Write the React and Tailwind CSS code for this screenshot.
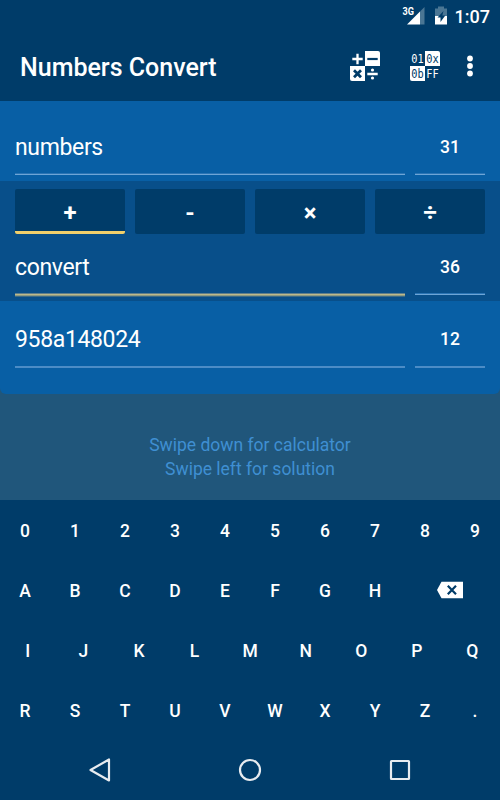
import React from 'react';

const operators = ['+', '-', '×', '÷'];

const keyRows = [
  ['0', '1', '2', '3', '4', '5', '6', '7', '8', '9'],
  ['A', 'B', 'C', 'D', 'E', 'F', 'G', 'H', 'DEL'],
  ['I', 'J', 'K', 'L', 'M', 'N', 'O', 'P', 'Q'],
  ['R', 'S', 'T', 'U', 'V', 'W', 'X', 'Y', 'Z', '.'],
];

const StatusBar = () => (
  <div className="h-9 flex items-start justify-end pr-[10px]">
    <svg width="46" height="30" viewBox="0 0 46 30" className="mr-[8px]">
      <path d="M19 11.5 L23.5 7 V24.5 H19 Z" fill="#4a7694" />
      <path d="M19 11.5 V24.5 H6 Z" fill="#fff" />
      <text x="1.5" y="15" fill="#fff" stroke="#003c69" strokeWidth="2" paintOrder="stroke" fontSize="10" fontWeight="700" fontFamily="Roboto" textLength="11.5" lengthAdjust="spacingAndGlyphs">3G</text>
      <path d="M37 6.5 h6 v2 h3 v8 h-12 v-8 h3 z" fill="#4a7694" />
      <path d="M34 16 h12 v8.5 h-12 z" fill="#fff" />
      <path d="M42.5 11 L36.5 17.4 h3 v4.6 L44.3 15.6 h-3 z" fill="#003c69" />
    </svg>
    <span className="text-[18px] leading-[33px] font-medium">1:07</span>
  </div>
);

const CalculatorIcon = () => (
  <svg width="30" height="30" viewBox="0 0 30 30">
    <path d="M15 0 h13 a2 2 0 0 1 2 2 v13 h-15 z" fill="#fff" />
    <path d="M0 15 h15 v15 h-13 a2 2 0 0 1 -2 -2 z" fill="#fff" />
    <path d="M7.5 2.8 v10.4 M2.3 8 h10.4 M17.3 23 h10.4" stroke="#fff" strokeWidth="2.3" />
    <path d="M17.3 8 h10.4" stroke="#003c69" strokeWidth="2.2" />
    <path d="M4 19.3 L11 26.3 M11 19.3 L4 26.3" stroke="#003c69" strokeWidth="2.8" />
    <circle cx="22.5" cy="19" r="1.6" fill="#fff" />
    <circle cx="22.5" cy="27" r="1.6" fill="#fff" />
  </svg>
);

const BaseIcon = () => (
  <svg width="30" height="30" viewBox="0 0 30 30" fontFamily="DejaVu Sans Mono, monospace">
    <path d="M15 0 h13 a2 2 0 0 1 2 2 v13 h-15 z" fill="#fff" />
    <path d="M0 15 h15 v15 h-13 a2 2 0 0 1 -2 -2 z" fill="#fff" />
    <g fontSize="12">
      <text x="1.3" y="12" fill="#fff" textLength="12.4" lengthAdjust="spacingAndGlyphs">01</text>
      <text x="16.3" y="12" fill="#003c69" textLength="12.4" lengthAdjust="spacingAndGlyphs">0x</text>
      <text x="1.3" y="27" fill="#003c69" textLength="12.4" lengthAdjust="spacingAndGlyphs">0b</text>
      <text x="16.3" y="27" fill="#fff" textLength="12.4" lengthAdjust="spacingAndGlyphs">FF</text>
    </g>
  </svg>
);

const AppBar = () => (
  <div className="h-[65px] flex items-start pl-5 pr-[26px]">
    <h1 className="flex-1 pt-[17px] text-[25px] leading-[30px] font-medium whitespace-nowrap">Numbers Convert</h1>
    <div className="pt-[15px] flex">
      <CalculatorIcon />
      <div className="ml-[30px]">
        <BaseIcon />
      </div>
      <svg width="8" height="24" viewBox="0 0 8 24" className="ml-[26px] mt-[3px]" fill="#fff">
        <circle cx="4" cy="4.5" r="2.9" />
        <circle cx="4" cy="12" r="2.9" />
        <circle cx="4" cy="19.5" r="2.9" />
      </svg>
    </div>
  </div>
);

const Underline = ({ even }) =>
  even ? (
    <div className="h-[2px] bg-[#4c8cc6]" />
  ) : (
    <div className="h-[2px] border-t border-[#2a74b4] bg-[#6ea5d6]" />
  );

const NumberRow = ({ value, base, active, even }) => (
  <div className="flex gap-[10px] px-[15px]">
    <div className="w-[390px] h-[54px] flex flex-col">
      <span className={`text-[23px] tracking-[-0.35px] leading-[49px] ${even ? 'h-[51px]' : 'h-[50px]'}`}>{value}</span>
      {active ? (
        <div>
          <div className="h-px bg-[#5f7f8c]" />
          <div className="h-px bg-[#bdb98a]" />
          <div className="h-px bg-[#8c9a82]" />
          <div className="h-px bg-[#3b6a88]" />
        </div>
      ) : (
        <Underline even={even} />
      )}
    </div>
    <div className="w-[70px] h-[54px] flex flex-col text-center">
      <span className={`text-[17.5px] leading-[48px] font-medium ${even ? 'h-[51px]' : 'h-[50px]'}`}>{base}</span>
      <Underline even={even} />
    </div>
  </div>
);

const OperatorButton = ({ label, selected }) => (
  <button className="flex-1 h-[45px] flex flex-col rounded-[2px] overflow-hidden bg-[#003c69]">
    <span className="h-[42px] w-full text-[24px] leading-[48px] font-bold">{label}</span>
    {selected && <div className="h-[3px] w-full bg-[#f1cf6b]" />}
  </button>
);

const BackspaceIcon = () => (
  <svg width="26" height="18" viewBox="0 0 26 18">
    <path d="M4.5 0.8 H26 V17.2 H4.5 L0 9 Z" fill="#fff" />
    <path d="M10.8 4.8 L19 13.2 M19 4.8 L10.8 13.2" stroke="#003c69" strokeWidth="2.2" />
  </svg>
);

const Keyboard = () => (
  <div className="h-[240px] bg-[#003c69]">
    {keyRows.map((row, i) => (
      <div key={i} className="h-[60px] flex">
        {row.map((key) =>
          key === 'DEL' ? (
            <button key={key} className="w-[100px] flex items-center justify-center">
              <BackspaceIcon />
            </button>
          ) : (
            <button key={key} className="flex-1 text-[17.5px] leading-[60px] font-medium pt-px">
              {key}
            </button>
          )
        )}
      </div>
    ))}
  </div>
);

const NavBar = () => (
  <div className="h-[60px] bg-[#003c69] flex justify-between px-[88px] items-center">
    <svg width="24" height="26" viewBox="0 0 24 26" fill="none" stroke="#e8ecf0" strokeWidth="2.2">
      <path d="M21 2.5 V23.5 L2.5 13 Z" strokeLinejoin="round" />
    </svg>
    <svg width="24" height="24" viewBox="0 0 24 24" fill="none" stroke="#e8ecf0" strokeWidth="2.2">
      <circle cx="12" cy="12" r="10" />
    </svg>
    <svg width="24" height="24" viewBox="0 0 24 24" fill="none" stroke="#e8ecf0" strokeWidth="2.2">
      <rect x="3" y="3" width="18" height="18" rx="0.5" />
    </svg>
  </div>
);

const App = () => {
  return (
    <div className="w-[500px] h-[800px] flex flex-col overflow-hidden bg-[#20567b] text-white font-[Roboto,sans-serif]">
      <div className="h-[101px] bg-[#003c69]">
        <StatusBar />
        <AppBar />
      </div>

      <div className="h-20 pt-[22px] bg-[#085fa5]">
        <NumberRow value="numbers" base="31" />
      </div>

      <div className="h-[120px] pt-2 bg-[#084f8a]">
        <div className="flex gap-[10px] px-[15px] mb-[9px]">
          {operators.map((op) => (
            <OperatorButton key={op} label={op} selected={op === '+'} />
          ))}
        </div>
        <NumberRow value="convert" base="36" active />
      </div>

      <div className="h-[93px] pt-[14px] bg-[#085fa5] rounded-b-[6px]">
        <NumberRow value="958a148024" base="12" even />
      </div>

      <div className="flex-1 pt-[39px] text-center text-[17.5px] leading-6 text-[#3f8fd2]">
        <p>Swipe down for calculator</p>
        <p>Swipe left for solution</p>
      </div>

      <Keyboard />
      <NavBar />
    </div>
  );
};

export default App;
